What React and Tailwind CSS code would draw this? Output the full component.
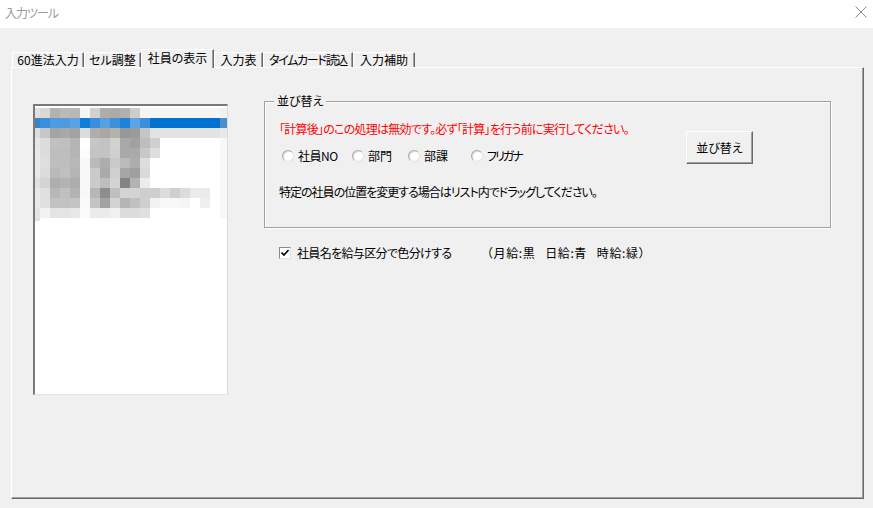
import React from "react";

const tabs = [
  { label: "60進法入力", w: 72, tr: "tracking-[0px]" },
  { label: "セル調整", w: 57, tr: "tracking-[0px]" },
  { label: "社員の表示", w: 73, active: true, tr: "tracking-[0px]" },
  { label: "入力表", w: 49, tr: "tracking-[0px]" },
  { label: "タイムカード読込", w: 90, tr: "tracking-[-1.3px]" },
  { label: "入力補助", w: 62, tr: "tracking-[0px]" },
];

const W = "#ffffff";
const rows = [
  { c: ["#e2dfdc", "#dad7d4", "#b4b1ae", "#bcb9b6", "#bab7b4", "#f7f5f2", "#d3d0cd", "#afacaa", "#adaaa7", "#b2afac", "#cfccc9"], rest: "#f7f5f2", last: "#f3f1ee" },
  { c: ["#2f86d6", "#3b8edd", "#4d9be1", "#4e9be1", "#5aa2e3", "#0c7dd9", "#3a8ede", "#57a1e3", "#3e90dd", "#1c82da", "#5ca5e4", "#3b8edb"], rest: "#0072d1", last: "#4d8fcc" },
  { c: ["#dcdcdc", "#c6c6c6", "#a4a4a4", "#a8a8a8", "#a2a2a2", "#dcdcdc", "#b2ada9", "#aca7a3", "#b5b1ad", "#989898", "#9b9b9b", "#c6c6c6"], rest: "#e3e3e3", last: "#e8e8e8" },
  { c: ["#e6e6e6", "#dcdcdc", "#c0c0c0", "#c0c0c0", "#b5b5b5", "#ffffff", "#c6c6c6", "#c3c3c3", "#d2d2d2", "#a9a9a9", "#a1a1a1", "#bdbdbd", "#cfcfcf"], rest: W, last: "#f8f8f8" },
  { c: ["#e8e8e8", "#dcdcdc", "#bebebe", "#bebebe", "#b5b5b5", "#fcfcfc", "#c4c4c4", "#c3c3c3", "#d0d0d0", "#a8a8a8", "#aaaaaa", "#c8c8c8", "#dedede"], rest: W, last: "#f8f8f8" },
  { c: ["#e8e8e8", "#dedede", "#bebebe", "#bebebe", "#b8b8b8", "#f8f8f8", "#bababa", "#adadad", "#c9c9c9", "#bababa", "#adadad", "#dedede"], rest: W, last: "#f8f8f8" },
  { c: ["#e8e8e8", "#dcdcdc", "#b9b9b9", "#c0c0c0", "#b5b5b5", "#f8f8f8", "#cacaca", "#aaaaaa", "#d0d0d0", "#a6a6a6", "#9f9f9f", "#dadada"], rest: W, last: "#f8f8f8" },
  { c: ["#e0e0e0", "#d4d4d4", "#aeaeae", "#b3b3b3", "#adadad", "#f8f8f8", "#cbcbcb", "#bdbdbd", "#d3d3d3", "#848484", "#b3b3b3", "#ececec"], rest: W, last: "#f8f8f8" },
  { c: ["#e8e8e8", "#e0e0e0", "#b8b8b8", "#c0c0c0", "#b3b3b3", "#f8f8f8", "#b7b7b7", "#8d8d8d", "#bfbfbf", "#d4d4d4", "#d4d4d4", "#cecece", "#cecece", "#dcdcdc", "#cfcfcf", "#dcdcdc", "#ebebeb", "#ebebeb"], rest: W, last: "#f8f8f8" },
  { c: ["#e8e8e8", "#e0e0e0", "#c2c2c2", "#c2c2c2", "#c4c4c4", "#fafafa", "#c4c4c4", "#a3a3a3", "#d3d3d3", "#b5b5b5", "#c1c1c1", "#cfcfcf", "#f2f2f2", "#f8f8f8", "#f8f8f8", "#f5f5f5", "#ffffff", "#efefef"], rest: W, last: "#f8f8f8" },
  { c: ["#e5e5e5", "#f2f2f2", "#e4e4e4", "#e4e4e4", "#e8e8e8", "#fbfbfb", "#ebebeb", "#ebebeb", "#f0f0f0", "#dcdcdc", "#dcdcdc", "#e0e0e0"], rest: W, last: "#f8f8f8" },
];

function colX(i) {
  return i === 0 ? 0 : 5 + 10 * (i - 1);
}
function colW(i) {
  if (i === 0) return 5;
  if (i === 19) return 7;
  return 10;
}

function Mosaic() {
  const rects = [];
  rows.forEach((r, ri) => {
    const y = 2 + ri * 10;
    for (let i = 0; i < 20; i++) {
      let fill = i < r.c.length ? r.c[i] : r.rest;
      if (i === 19) fill = r.last;
      rects.push(<rect key={ri + "-" + i} x={colX(i)} y={y} width={colW(i)} height={10} fill={fill} />);
    }
  });
  rects.push(<rect key="tail" x={0} y={112} width={5} height={3} fill="#e0e0e0" />);
  return (
    <svg width="192" height="287" viewBox="0 0 192 287" className="block">
      <rect x="0" y="0" width="192" height="287" fill="#ffffff" />
      {rects}
      <line x1="0.5" y1="12" x2="0.5" y2="22" stroke="#b8682a" strokeDasharray="1 1" />
    </svg>
  );
}

function Radio({ label, w, tr }) {
  return (
    <div className="flex items-center h-[16px]" style={{ width: w }}>
      <span className="w-[12px] h-[12px] rounded-full bg-white border border-[#a8a8a8] border-r-[#e3e3e3] border-b-[#e3e3e3] shadow-[inset_1px_1px_0_#dcdcdc] shrink-0" />
      <span className={"ml-[4px] whitespace-nowrap " + tr}>{label}</span>
    </div>
  );
}

export default function App() {
  return (
    <div className="w-[873px] h-[508px] bg-[#f0f0f0] flex flex-col overflow-hidden font-['Noto_Sans_CJK_JP',sans-serif] [font-feature-settings:'palt'] text-[12px] text-black">
      {/* Title bar */}
      <div className="h-[28px] bg-white flex items-center justify-between pl-[5px] pr-[6px] shrink-0">
        <span className="text-[12px] leading-[16px] text-[#9a9a9a] -mt-[3px] tracking-[-1px]">入力ツール</span>
        <svg width="12" height="12" viewBox="0 0 12 12" className="-mt-[4px]">
          <path d="M0.5 0.5 L11.5 11.5 M11.5 0.5 L0.5 11.5" stroke="#8a8a8a" strokeWidth="1" fill="none" />
        </svg>
      </div>

      {/* Body */}
      <div className="flex-1 flex flex-col pl-[11px] pr-[9px] pt-[21px] pb-[9px]">
        {/* Tabs */}
        <div className="h-[18px] flex items-end pl-px shrink-0">
          {tabs.map((t) =>
            t.active ? (
              <div
                key={t.label}
                className="h-[19px] -mb-px relative z-10 bg-[#f0f0f0] border-t border-l border-white border-r border-r-[#696969] shadow-[inset_-1px_0_0_#a0a0a0] flex justify-center leading-[16px] whitespace-nowrap"
                style={{ width: t.w }}
              >
                <span className={t.tr}>{t.label}</span>
              </div>
            ) : (
              <div
                key={t.label}
                className="h-[15px] border-t border-l border-white border-r border-r-[#696969] shadow-[inset_-1px_0_0_#a0a0a0] flex justify-center items-center leading-[14px] whitespace-nowrap"
                style={{ width: t.w }}
              >
                <span className={t.tr}>{t.label}</span>
              </div>
            )
          )}
        </div>

        {/* Page */}
        <div className="flex-1 flex items-start pl-[21px] pt-[33px] border-t border-l border-white border-r border-b border-r-[#696969] border-b-[#696969] shadow-[inset_-1px_-1px_0_#a0a0a0]">
          {/* Listbox */}
          <div className="mt-[3px] w-[195px] h-[291px] bg-white border-t-2 border-l-2 border-t-[#7a7a7a] border-l-[#7a7a7a] border-r border-b border-r-[#dcdcdc] border-b-[#e3e3e3] overflow-hidden shrink-0">
            <Mosaic />
          </div>

          {/* Right column */}
          <div className="ml-[36px] flex flex-col">
            {/* Group box */}
            <div className="w-[567px] h-[127px] border border-[#a0a0a0] shadow-[1px_1px_0_#ffffff,inset_1px_1px_0_#ffffff]">
              <div className="w-fit -mt-[9px] ml-[9px] px-[3px] bg-[#f0f0f0] leading-[16px] h-[16px]">並び替え</div>
              <div className="flex">
                <div className="flex-1 pl-[14px] flex flex-col">
                  <div className="mt-[12px] leading-[16px] h-[16px] text-[#ff0000] whitespace-nowrap tracking-[-0.75px]">
                    「計算後」のこの処理は無効です。必ず「計算」を行う前に実行してください。
                  </div>
                  <div className="mt-[11px] flex items-center pl-[3px]">
                    <Radio label="社員NO" w={70} tr="tracking-[-0.5px]" />
                    <Radio label="部門" w={56} tr="" />
                    <Radio label="部課" w={63} tr="" />
                    <Radio label="フリガナ" w={80} tr="tracking-[-2px]" />
                  </div>
                  <div className="mt-[20px] leading-[16px] h-[16px] whitespace-nowrap tracking-[-1px]">
                    特定の社員の位置を変更する場合はリスト内でドラッグしてください。
                  </div>
                </div>
                <button className="mt-[22px] mr-[77px] w-[67px] h-[33px] bg-[#f0f0f0] border border-white border-r-[#696969] border-b-[#696969] shadow-[inset_-1px_-1px_0_#a0a0a0] flex items-center justify-center leading-[16px] shrink-0">
                  並び替え
                </button>
              </div>
            </div>

            {/* Checkbox row */}
            <div className="mt-[17px] ml-[15px] flex items-center h-[16px]">
              <span className="w-[12px] h-[12px] bg-white border border-[#8a8a8a] border-r-[#e3e3e3] border-b-[#e3e3e3] flex items-center justify-center shrink-0">
                <svg width="8" height="8" viewBox="0 0 8 8">
                  <path d="M0.5 3.5 L3 6 L7.5 1" stroke="#000" strokeWidth="1.6" fill="none" />
                </svg>
              </span>
              <span className="ml-[6px] w-[184px] whitespace-nowrap leading-[16px] tracking-[-0.65px]">社員名を給与区分で色分けする</span>
              <span className="whitespace-nowrap leading-[16px] tracking-[0.6px] [font-feature-settings:normal]">（月給:黒&nbsp;&nbsp;&nbsp;日給:青&nbsp;&nbsp;&nbsp;時給:緑）</span>
            </div>
          </div>
        </div>
      </div>
    </div>
  );
}
